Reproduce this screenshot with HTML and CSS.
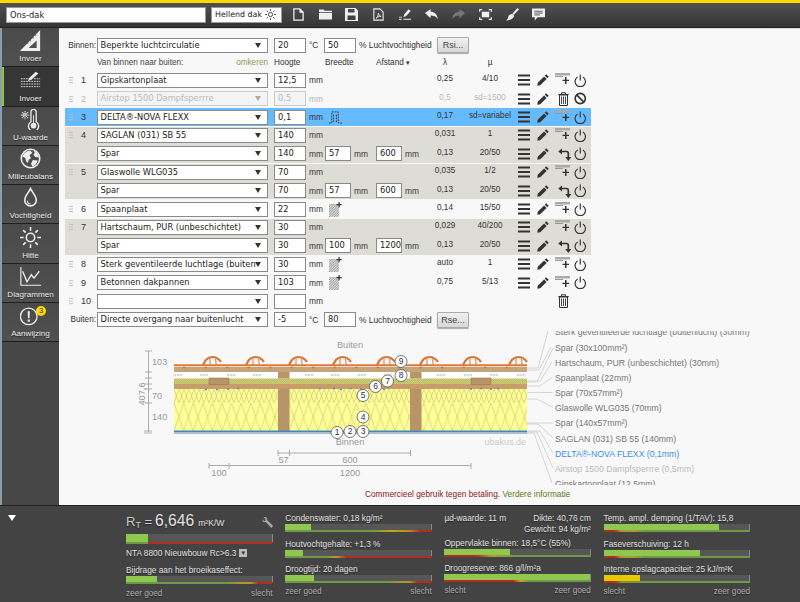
FILE: index.html
```html
<!DOCTYPE html>
<html lang="nl">
<head>
<meta charset="utf-8">
<title>Ons-dak</title>
<link rel="stylesheet" href="styles.css">
</head>
<body>
<svg class="defs" width="0" height="0">
  <symbol id="i-ham" viewBox="0 0 12 11"><path d="M0 0h12v2H0zM0 4.500h12v2H0zM0 9h12v2H0z"/></symbol>
  <symbol id="i-pen" viewBox="0 0 12 12"><path d="M9.200.3 11.700 2.800 10.300 4.200 7.800 1.700zM7.100 2.400 9.600 4.900 3.200 11.300.3 11.700.7 8.800z"/></symbol>
  <symbol id="i-add" viewBox="0 0 15 12"><path fill="#aaa" d="M0 0h15v2.500H0z"/><path fill="#999" d="M0 3h8v1H0z"/><path d="M10 4h1.500v2.700H14v1.400h-2.500V11H10V8.100H7.500V6.700H10z"/></symbol>
  <symbol id="i-pow" viewBox="0 0 13 13"><path fill="none" stroke="currentColor" stroke-width="1.200" d="M3.800 2.800a5.400 5.400 0 1 0 5.400 0M6.500.3v6.200"/></symbol>
  <symbol id="i-bin" viewBox="0 0 11 14"><path fill="none" stroke="currentColor" d="M1.500 3v10.500h8V3zM.3 2.500h10.400M3.500 2V.8h4V2"/><path stroke="currentColor" stroke-width=".9" d="M3.500 4.500v7.500M5.500 4.500v7.500M7.500 4.500v7.500"/></symbol>
  <symbol id="i-no" viewBox="0 0 11 11"><circle cx="5.500" cy="5.500" r="4.500" fill="none" stroke="currentColor" stroke-width="1.400"/><path stroke="currentColor" stroke-width="1.400" d="M2.300 2.300l6.400 6.400"/></symbol>
  <symbol id="i-turn" viewBox="0 0 13 13"><path fill="none" stroke="currentColor" stroke-width="1.700" d="M3 3.500h5.500q1.800 0 1.800 1.800V10"/><path d="M4 .5v6L.2 3.500zM7.300 9h6L10.300 13z"/></symbol>
  <symbol id="i-hatch" viewBox="0 0 13 15"><rect y="2" width="10" height="13" fill="url(#wood)"/><path d="M9.500 0h1.200v2h2v1.200h-2v2H9.500v-2h-2V2h2z"/></symbol>
  <pattern id="wood" width="2.500" height="2.500" patternUnits="userSpaceOnUse"><rect width="2.500" height="2.500" fill="#ddd"/><path d="M0 2.500 2.500 0" stroke="#777" stroke-width=".7"/></pattern>
</svg>

<div class="topline"></div>
<header class="toolbar">
  <div class="name">Ons-dak</div>
  <div class="kind">Hellend dak
    <svg class="sun" viewBox="0 0 12 12"><circle cx="6" cy="6" r="2.300" fill="none" stroke="#333"/><path stroke="#333" d="M6 0v2M6 10v2M0 6h2M10 6h2M1.800 1.800l1.400 1.400M8.800 8.800l1.400 1.400M1.800 10.200l1.400-1.400M8.800 3.200l1.400-1.400"/></svg>
  </div>
  <div class="tools">
    <svg viewBox="0 0 12 14"><path fill="none" stroke="#eee" stroke-width="1.400" d="M1 1h6.500L11 4.500V13H1z"/><path fill="#eee" d="M7 1h1l3 3v1H7z"/></svg>
    <svg viewBox="0 0 14 13"><path fill="#eee" d="M0 1h5l1 1.500h8V4H0zM0 5h14v7H0z"/></svg>
    <svg viewBox="0 0 13 13"><path fill="#eee" fill-rule="evenodd" d="M0 0h10.500L13 2.500V13H0zM3 1v3.500h6.500V1zM2.500 7.500V12h8V7.500z"/></svg>
    <svg viewBox="0 0 12 14"><path fill="none" stroke="#eee" stroke-width="1.200" d="M1 1h6.500L11 4.500V13H1z"/><path fill="none" stroke="#eee" d="M3.500 11c1.500-1 2.500-3.500 2.300-5.500.5 2 1.500 3 3 3.500-2 0-3.500.5-5.300 2z"/></svg>
    <svg viewBox="0 0 15 13"><path fill="#eee" d="M11 .5l2.500 2L8 8.500 5 9.500l1-3zM0 11.500h3v1H0zM5 11.500h9v1H5zM0 9h3.500v1H0z"/></svg>
    <svg viewBox="0 0 14 12"><path fill="#eee" d="M6 0v3c4 0 7 2.500 8 8-2-3-4.500-4-8-4v3L0 4.500z"/></svg>
    <svg viewBox="0 0 14 12"><path fill="#777" d="M8 0v3C4 3 1 5.500 0 11c2-3 4.500-4 8-4v3l6-5.500z"/></svg>
    <svg viewBox="0 0 14 12"><path fill="none" stroke="#eee" stroke-width="1.300" d="M0.700 3V.7H3.500M10.500.7h2.800V3M13.300 9v2.300h-2.800M3.500 11.300H.7V9"/><rect x="3" y="3" width="8" height="6" fill="#eee"/></svg>
    <svg viewBox="0 0 13 13"><path fill="#eee" d="M11.500 0 13 1.200 8 6.800 6.500 5.500zM6 6c1.500 0 2.500 1.200 1.800 2.800C7 11 3.500 12.500 0 12.500c1.500-1 2-2 2.200-3.500C2.500 7 4.500 6 6 6z"/></svg>
    <svg viewBox="0 0 14 13"><path fill="#eee" d="M0 0h14v9.500H6L3 13V9.500H0z"/><path stroke="#555" d="M2.500 3h9M2.500 5h9M2.500 7h6"/></svg>
  </div>
</header>

<div class="middle">
  <nav class="side">
    <a class="item">
      <svg viewBox="0 0 24 24"><path fill="#eee" fill-rule="evenodd" d="M23 0v24H0zM19 12 10 20.500h9z"/><path stroke="#4a4a4a" stroke-width=".8" d="M18 5v2M15 8v2M12 11v2M9 14v2"/></svg>
      <span>Invoer</span>
    </a>
    <a class="item active">
      <svg viewBox="0 0 24 20"><path stroke="#eee" stroke-dasharray="2 1" d="M1 8h11M1 11h22M1 14h22M1 17h22M16 8h7"/><path fill="#eee" d="M18 0l3 2-8 7-4 1.500L10.500 7z"/></svg>
      <span>Invoer</span>
    </a>
    <a class="item">
      <svg viewBox="0 0 24 24"><path fill="none" stroke="#eee" stroke-width="1.500" d="M12.500 14.500V3.500a3 3 0 0 1 6 0v11a5.800 5.800 0 1 1-6 0z"/><circle cx="15.500" cy="19" r="3.200" fill="#eee"/><path fill="#eee" d="M15 7h1v10h-1z"/><path stroke="#eee" stroke-width="1.200" stroke-dasharray="1.500 .6" d="M1 7h9.500M5.700 2.300v9.500M2.300 3.600l6.800 6.800M9.100 3.600l-6.800 6.800"/></svg>
      <span>U-waarde</span>
    </a>
    <a class="item">
      <svg viewBox="0 0 22 22"><circle cx="11" cy="11" r="9.700" fill="none" stroke="#eee" stroke-width="1.700"/><path fill="#eee" d="M4 6c2-2 5-3.500 7-3l2 2-3 2.500 1.500 3-2.500 2-.5 3-2-1-1-4-3-1.500zM14 2.500c3 1 5.500 4 5.500 7.500l-3.500-.5L14 7l1.500-2zM13.500 12.500l5 .5c-.5 3-3 5.500-5.500 6.500l-1.500-3z"/></svg>
      <span>Milieubalans</span>
    </a>
    <a class="item">
      <svg viewBox="0 0 14 20"><path fill="none" stroke="#eee" stroke-width="1.500" d="M7 1.500C5.500 5 1.500 8.500 1.500 12.500a5.500 5.500 0 0 0 11 0C12.500 8.500 8.500 5 7 1.500z"/><path fill="none" stroke="#eee" d="M4 13a3 3 0 0 0 3 3"/></svg>
      <span>Vochtigheid</span>
    </a>
    <a class="item">
      <svg viewBox="0 0 20 20"><circle cx="10" cy="10" r="4" fill="none" stroke="#eee" stroke-width="1.500"/><path stroke="#eee" stroke-width="1.500" d="M10 0v3.500M10 16.500V20M0 10h3.500M16.500 10H20M3 3l2.400 2.400M14.600 14.600 17 17M3 17l2.400-2.400M14.600 5.400 17 3"/></svg>
      <span>Hitte</span>
    </a>
    <a class="item">
      <svg viewBox="0 0 24 22"><path fill="none" stroke="#eee" stroke-width="1.300" d="M1 0v21h23"/><path fill="none" stroke="#eee" stroke-width="1.500" d="M3 5l5 12 5-8 3 4 6-8"/></svg>
      <span>Diagrammen</span>
    </a>
    <a class="item">
      <svg viewBox="0 0 24 24"><circle cx="10" cy="13" r="9.500" fill="none" stroke="#eee" stroke-width="1.500"/><path fill="#eee" d="M8.700 7h2.600l-.5 8H9.200zM8.800 16.500h2.400V19H8.800z"/></svg>
      <b class="badge">3</b>
      <span>Aanwijzing</span>
    </a>
  </nav>

  <main class="content">
    <form class="layers">
      <div class="air">
        <label class="lead lead-text">Binnen:</label>
        <div class="sel">Beperkte luchtcirculatie</div>
        <div class="inp first">20</div><span class="unit u-c">°C</span>
        <div class="inp">50</div><span class="unit u-pct">% Luchtvochtigheid</span>
        <button type="button" class="btn">Rsi...</button>
      </div>
      <div class="grid head">
        <span class="c-sel">Van binnen naar buiten:<em>omkeren</em></span>
        <span class="c-h">Hoogte</span><span class="c-w">Breedte</span><span class="c-d">Afstand <small>▾</small></span>
        <span class="c-l">λ</span><span class="c-m">µ</span>
      </div>

      <div class="grid row">
        <span class="lead"><i class="grip"></i><b>1</b></span><div class="sel">Gipskartonplaat</div>
        <div class="inp c-h">12,5</div><span class="unit">mm</span><span class="c-l">0,25</span><span class="c-m">4/10</span>
        <span class="acts"><svg><use href="#i-ham"/></svg><svg><use href="#i-pen"/></svg><svg class="wide"><use href="#i-add"/></svg><svg><use href="#i-pow"/></svg></span>
      </div>
      <div class="grid row off">
        <span class="lead"><i class="grip"></i><b>2</b></span><div class="sel">Airstop 1500 Dampfsperrre</div>
        <div class="inp c-h">0,5</div><span class="unit">mm</span><span class="c-l">0,5</span><span class="c-m">sd=1500</span>
        <span class="acts"><svg><use href="#i-ham"/></svg><svg><use href="#i-pen"/></svg><svg class="bin"><use href="#i-bin"/></svg><svg><use href="#i-no"/></svg></span>
      </div>
      <div class="grid row sel-row">
        <span class="lead"><i class="grip"></i><b>3</b></span><div class="sel">DELTA®-NOVA FLEXX</div>
        <div class="inp c-h">0,1</div><span class="unit">mm</span>
        <svg class="c-w mini" viewBox="0 0 14 14"><path fill="none" stroke="#333" stroke-dasharray="2 1" d="M0 13h3V1h7v12h4M5 4v8M8 4v8"/></svg>
        <span class="c-l">0,17</span><span class="c-m">sd=variabel</span>
        <span class="acts"><svg><use href="#i-ham"/></svg><svg><use href="#i-pen"/></svg><svg class="wide"><use href="#i-add"/></svg><svg><use href="#i-pow"/></svg></span>
      </div>

      <div class="group">
        <div class="grid row">
          <span class="lead"><i class="grip"></i><b>4</b></span><div class="sel">SAGLAN (031) SB 55</div>
          <div class="inp c-h">140</div><span class="unit">mm</span><span class="c-l">0,031</span><span class="c-m">1</span>
          <span class="acts"><svg><use href="#i-ham"/></svg><svg><use href="#i-pen"/></svg><svg class="wide"><use href="#i-add"/></svg><svg><use href="#i-pow"/></svg></span>
        </div>
        <div class="grid row">
          <span class="lead"></span><div class="sel">Spar</div>
          <div class="inp c-h">140</div><span class="unit">mm</span><div class="inp c-w">57</div><span class="unit">mm</span><div class="inp c-d">600</div><span class="unit">mm</span><span class="c-l">0,13</span><span class="c-m">20/50</span>
          <span class="acts"><svg><use href="#i-ham"/></svg><svg><use href="#i-pen"/></svg><svg class="turn"><use href="#i-turn"/></svg><svg><use href="#i-pow"/></svg></span>
        </div>
      </div>
      <div class="group">
        <div class="grid row">
          <span class="lead"><i class="grip"></i><b>5</b></span><div class="sel">Glaswolle WLG035</div>
          <div class="inp c-h">70</div><span class="unit">mm</span><span class="c-l">0,035</span><span class="c-m">1/2</span>
          <span class="acts"><svg><use href="#i-ham"/></svg><svg><use href="#i-pen"/></svg><svg class="wide"><use href="#i-add"/></svg><svg><use href="#i-pow"/></svg></span>
        </div>
        <div class="grid row">
          <span class="lead"></span><div class="sel">Spar</div>
          <div class="inp c-h">70</div><span class="unit">mm</span><div class="inp c-w">57</div><span class="unit">mm</span><div class="inp c-d">600</div><span class="unit">mm</span><span class="c-l">0,13</span><span class="c-m">20/50</span>
          <span class="acts"><svg><use href="#i-ham"/></svg><svg><use href="#i-pen"/></svg><svg class="turn"><use href="#i-turn"/></svg><svg><use href="#i-pow"/></svg></span>
        </div>
      </div>

      <div class="grid row">
        <span class="lead"><i class="grip"></i><b>6</b></span><div class="sel">Spaanplaat</div>
        <div class="inp c-h">22</div><span class="unit">mm</span><svg class="c-w mini"><use href="#i-hatch"/></svg><span class="c-l">0,14</span><span class="c-m">15/50</span>
        <span class="acts"><svg><use href="#i-ham"/></svg><svg><use href="#i-pen"/></svg><svg class="wide"><use href="#i-add"/></svg><svg><use href="#i-pow"/></svg></span>
      </div>

      <div class="group">
        <div class="grid row">
          <span class="lead"><i class="grip"></i><b>7</b></span><div class="sel">Hartschaum, PUR (unbeschichtet)</div>
          <div class="inp c-h">30</div><span class="unit">mm</span><span class="c-l">0,029</span><span class="c-m">40/200</span>
          <span class="acts"><svg><use href="#i-ham"/></svg><svg><use href="#i-pen"/></svg><svg class="wide"><use href="#i-add"/></svg><svg><use href="#i-pow"/></svg></span>
        </div>
        <div class="grid row">
          <span class="lead"></span><div class="sel">Spar</div>
          <div class="inp c-h">30</div><span class="unit">mm</span><div class="inp c-w">100</div><span class="unit">mm</span><div class="inp c-d">1200</div><span class="unit">mm</span><span class="c-l">0,13</span><span class="c-m">20/50</span>
          <span class="acts"><svg><use href="#i-ham"/></svg><svg><use href="#i-pen"/></svg><svg class="turn"><use href="#i-turn"/></svg><svg><use href="#i-pow"/></svg></span>
        </div>
      </div>

      <div class="grid row">
        <span class="lead"><i class="grip"></i><b>8</b></span><div class="sel">Sterk geventileerde luchtlage (buiten</div>
        <div class="inp c-h">30</div><span class="unit">mm</span><svg class="c-w mini"><use href="#i-hatch"/></svg><span class="c-l">auto</span><span class="c-m">1</span>
        <span class="acts"><svg><use href="#i-ham"/></svg><svg><use href="#i-pen"/></svg><svg class="wide"><use href="#i-add"/></svg><svg><use href="#i-pow"/></svg></span>
      </div>
      <div class="grid row">
        <span class="lead"><i class="grip"></i><b>9</b></span><div class="sel">Betonnen dakpannen</div>
        <div class="inp c-h">103</div><span class="unit">mm</span><svg class="c-w mini"><use href="#i-hatch"/></svg><span class="c-l">0,75</span><span class="c-m">5/13</span>
        <span class="acts"><svg><use href="#i-ham"/></svg><svg><use href="#i-pen"/></svg><svg class="wide"><use href="#i-add"/></svg><svg><use href="#i-pow"/></svg></span>
      </div>
      <div class="grid row">
        <span class="lead"><i class="grip"></i><b>10</b></span><div class="sel"></div>
        <div class="inp c-h"></div><span class="unit">mm</span>
        <span class="acts only-bin"><svg class="bin"><use href="#i-bin"/></svg></span>
      </div>

      <div class="air outer">
        <label class="lead lead-text">Buiten:</label>
        <div class="sel">Directe overgang naar buitenlucht</div>
        <div class="inp first">-5</div><span class="unit u-c">°C</span>
        <div class="inp">80</div><span class="unit u-pct">% Luchtvochtigheid</span>
        <button type="button" class="btn">Rse...</button>
      </div>
    </form>

    <svg class="diagram" viewBox="59 333 741 154" width="741" height="154">
      <defs>
        <pattern id="zig-l" x="174" y="405" width="9.600" height="28" patternUnits="userSpaceOnUse"><path fill="none" stroke="#c9c168" stroke-width=".6" d="M0 0 9.600 28M9.600 0 0 28"/></pattern>
        <pattern id="zig-s" x="174" y="391" width="5" height="14" patternUnits="userSpaceOnUse"><path fill="none" stroke="#c9c168" stroke-width=".6" d="M0 0 5 14M5 0 0 14"/></pattern>
        <pattern id="foam" width="2" height="2" patternUnits="userSpaceOnUse"><rect width="2" height="2" fill="#cfcf78"/><path d="M0 2 2 0" stroke="#a8a850" stroke-width=".5"/></pattern>
        <g id="tile"><path fill="none" stroke="#d9763a" stroke-width="2.200" d="M-9 0C-7-4-5-8 0-8 4-8 7-6 9-3"/><path fill="none" stroke="#d9763a" d="M-2-7V0M3-6C4-5 4-3 4 0"/></g>
        <g id="vent"><g fill="none" stroke="#aaa" stroke-width=".5"><circle cx="0" cy="377" r="1"/><circle cx="3" cy="377" r="1"/><circle cx="6" cy="377" r="1"/></g></g>
      </defs>

      <!-- layers -->
      <rect x="174" y="374" width="353" height="6.500" fill="#fff"/>
      <rect x="174" y="380.500" width="353" height="5.500" fill="url(#foam)"/>
      <rect x="174" y="386" width="353" height="5" fill="#c99c6b"/>
      <rect x="174" y="391" width="353" height="14" fill="#ffff99"/>
      <rect x="174" y="391" width="353" height="14" fill="url(#zig-s)"/>
      <rect x="174" y="405" width="353" height="28" fill="#ffff99"/>
      <rect x="174" y="405" width="353" height="28" fill="url(#zig-l)"/>
      <rect x="278" y="374" width="11.500" height="6.500" fill="#b99468"/>
      <rect x="410" y="374" width="11.500" height="6.500" fill="#b99468"/>
      <rect x="278" y="391" width="11.500" height="42" fill="#b99468"/>
      <rect x="410" y="391" width="11.500" height="42" fill="#b99468"/>
      <rect x="209" y="380" width="20" height="6.500" fill="#b99468" stroke="#8d7048" stroke-width=".5"/>
      <rect x="471" y="380" width="20" height="6.500" fill="#b99468" stroke="#8d7048" stroke-width=".5"/>
      <rect x="174" y="369" width="353" height="5" fill="#c4a479"/>
      <path stroke="#e07838" stroke-width="2" d="M174 367.300H527"/>
      <path stroke="#d9763a" stroke-width="1.500" stroke-dasharray="2.500 19" d="M183 369.500H527"/>
      <path stroke="#3a8abf" stroke-width="1.800" d="M174 433.500H527"/>
      <path stroke="#bbb" d="M174 435.500H527"/>
      <g>
        <use href="#tile" x="212" y="367"/><use href="#tile" x="255" y="367"/><use href="#tile" x="298" y="367"/><use href="#tile" x="342" y="367"/><use href="#tile" x="386" y="367"/><use href="#tile" x="429" y="367"/><use href="#tile" x="472" y="367"/><use href="#tile" x="518" y="367"/>
      </g>
      <g>
        <use href="#vent" x="175"/><use href="#vent" x="201"/><use href="#vent" x="228"/><use href="#vent" x="254"/><use href="#vent" x="306"/><use href="#vent" x="332"/><use href="#vent" x="359"/><use href="#vent" x="385"/><use href="#vent" x="438"/><use href="#vent" x="465"/><use href="#vent" x="491"/><use href="#vent" x="518"/>
      </g>
      <g fill="#3b8fe8">
        <circle cx="206" cy="391.500" r="1"/><circle cx="217" cy="391.500" r="1"/><circle cx="228" cy="391" r="1"/><circle cx="238" cy="390.500" r="1"/><circle cx="320" cy="390.500" r="1"/><circle cx="334" cy="390.500" r="1"/><circle cx="341" cy="391.500" r="1"/><circle cx="351" cy="390.500" r="1"/><circle cx="361" cy="391" r="1"/><circle cx="384" cy="391" r="1"/><circle cx="471" cy="391" r="1"/><circle cx="481" cy="390.500" r="1"/><circle cx="491" cy="391" r="1"/><circle cx="498" cy="390.500" r="1"/>
      </g>

      <!-- leader lines -->
      <g fill="none" stroke="#ccc" stroke-width=".8">
        <path d="M527 370h11l10-37"/><path d="M527 372h12l12-23"/><path d="M527 383h13l12-19"/><path d="M527 384h10l16-34"/><path d="M527 388h13l12-8.500"/><path d="M527 394.500h26"/><path d="M527 401h10l16 8.500"/><path d="M527 425h26"/><path d="M527 426h11l15 14"/><path d="M527 433h13l13 22"/><path d="M527 434h10l16 36"/><path d="M527 435h7l18 50"/>
      </g>

      <!-- dimensions -->
      <g fill="none" stroke="#999" stroke-width=".8">
        <path d="M148.500 353V434M145 353h7M145 374h7M145 380h7M145 386h7M145 391h7M145 405h7M144 433h8M144 435h8"/>
        <path d="M278 455h133M278 452v6M289.500 452v6M410.500 452v6"/>
        <path d="M209 467.500h262M209 465v6M229 465v6M471 465v6"/>
      </g>
      <g class="dim">
        <text x="152" y="367">103</text><text x="152" y="401">70</text><text x="152" y="422">140</text>
        <text transform="rotate(-90 145 396)" x="145" y="396" text-anchor="middle">407,6</text>
        <text x="283.500" y="465" text-anchor="middle">57</text><text x="350" y="465" text-anchor="middle">600</text>
        <text x="219" y="477.500" text-anchor="middle">100</text><text x="350" y="477.500" text-anchor="middle">1200</text>
        <text x="350" y="349.500" text-anchor="middle">Buiten</text><text x="350" y="446.500" text-anchor="middle">Binnen</text>
      </g>
      <text class="brand" x="526" y="446.500" text-anchor="end">ubakus.de</text>

      <!-- number markers -->
      <g class="marks">
        <g><circle cx="363" cy="397.500" r="6"/><text x="363" y="400.300">5</text></g>
        <g><circle cx="363" cy="419" r="6"/><text x="363" y="421.800">4</text></g>
        <g><circle cx="337" cy="434.500" r="6"/><text x="337" y="437.300">1</text></g>
        <g><circle cx="350" cy="433.500" r="6"/><text x="350" y="436.300">2</text></g>
        <g><circle cx="363" cy="433.500" r="6"/><text x="363" y="436.300">3</text></g>
        <g><circle cx="375.500" cy="388.500" r="6"/><text x="375.500" y="391.300">6</text></g>
        <g><circle cx="387.500" cy="383" r="6"/><text x="387.500" y="385.800">7</text></g>
        <g><circle cx="401" cy="377.500" r="6"/><text x="401" y="380.300">8</text></g>
        <g><circle cx="401" cy="363.500" r="6"/><text x="401" y="366.300">9</text></g>
      </g>

      <!-- legend -->
      <g class="legend">
        <text x="555" y="337">Sterk geventileerde luchtlage (buitenlucht) (30mm)</text>
        <text x="555" y="352.500">Spar (30x100mm²)</text>
        <text x="555" y="367.500">Hartschaum, PUR (unbeschichtet) (30mm)</text>
        <text x="555" y="382.800">Spaanplaat (22mm)</text>
        <text x="555" y="398">Spar (70x57mm²)</text>
        <text x="555" y="413">Glaswolle WLG035 (70mm)</text>
        <text x="555" y="428.300">Spar (140x57mm²)</text>
        <text x="555" y="443.500">SAGLAN (031) SB 55 (140mm)</text>
        <text class="cur" x="555" y="459">DELTA®-NOVA FLEXX (0,1mm)</text>
        <text class="dis" x="555" y="474">Airstop 1500 Dampfsperrre (0,5mm)</text>
        <text x="555" y="489">Gipskartonplaat (12,5mm)</text>
      </g>
    </svg>

    <p class="notice">Commercieel gebruik tegen betaling. <a>Verdere informatie</a></p>
  </main>
</div>

<footer class="results">
  <span class="toggle"></span>
  <section class="col">
    <div class="rt"><span class="r">R<sub>T</sub> =</span> <span class="big">6,646</span> <span class="rt-u">m²K/W</span>
      <svg class="wrench" viewBox="0 0 12 12"><path fill="#aaa" d="M0 2.500 2.500 4.500 4 3.500 3.500 1.500 1.500 0C4 -.5 6 1 5.800 3.500L12 9.500 10.500 12 4 5.500C2 6 0 5 0 2.500z"/></svg>
    </div>
    <div class="bar tall"><i class="val" style="width:15%"></i><i class="scale s-rt"></i></div>
    <div class="nta">NTA 8800 Nieuwbouw Rc&gt;6.3 <span class="drop">▼</span></div>
    <div class="lbl">Bijdrage aan het broeikaseffect:</div>
    <div class="bar"><i class="val" style="width:21%"></i><i class="scale s-a"></i></div>
    <div class="ends first-ends"><span>zeer goed</span><span>slecht</span></div>
  </section>
  <section class="col">
    <div class="m"><div class="lbl">Condenswater: 0,18 kg/m²</div><div class="bar"><i class="val" style="width:18%"></i><i class="scale s-b"></i></div></div>
    <div class="m"><div class="lbl">Houtvochtgehalte: +1,3 %</div><div class="bar"><i class="val" style="width:12%"></i><i class="scale s-c"></i></div></div>
    <div class="m"><div class="lbl">Droogtijd: 20 dagen</div><div class="bar"><i class="val" style="width:20%"></i><i class="scale s-a"></i></div></div>
    <div class="ends"><span>zeer goed</span><span>slecht</span></div>
  </section>
  <section class="col">
    <div class="info">
      <div class="info-l"><span>µd-waarde: 11 m</span><span>Dikte: 40,76 cm</span></div>
      <div class="info-r">Gewicht: 94 kg/m²</div>
    </div>
    <div class="m"><div class="lbl">Oppervlakte binnen: 18,5°C (55%)</div><div class="bar"><i class="val" style="width:45%"></i><i class="scale s-d"></i></div></div>
    <div class="m"><div class="lbl">Droogreserve: 866 g/l/m²a</div><div class="bar"><i class="val" style="width:100%"></i><i class="scale s-e"></i></div></div>
    <div class="ends"><span>slecht</span><span>zeer goed</span></div>
  </section>
  <section class="col">
    <div class="m"><div class="lbl">Temp. ampl. demping (1/TAV): 15,8</div><div class="bar"><i class="val" style="width:79%"></i><i class="scale s-f"></i></div></div>
    <div class="m"><div class="lbl">Faseverschuiving: 12 h</div><div class="bar"><i class="val" style="width:66%"></i><i class="scale s-f"></i></div></div>
    <div class="m"><div class="lbl">Interne opslagcapaciteit: 25 kJ/m²K</div><div class="bar"><i class="val warn" style="width:25%"></i><i class="scale s-g"></i></div></div>
    <div class="ends"><span>slecht</span><span>zeer goed</span></div>
  </section>
</footer>
</body>
</html>
```
FILE: styles.css
```css
* { box-sizing: border-box; }
html, body { margin: 0; height: 602px; overflow: hidden; }
body { display: flex; flex-direction: column; font: 8.200px "Liberation Sans", Arial, sans-serif; color: #333; background: #f8f8f8; }
.defs { position: absolute; }

.topline { height: 2.500px; flex: none; background: #ffd800; }
.toolbar { flex: none; height: 25.500px; display: flex; align-items: center; padding-left: 6px; background: linear-gradient(#505050, #353535); border-bottom: 1px solid #222; }
.name, .kind { height: 16.500px; background: #fff; border: 1px solid #999; font: 8.300px "DejaVu Sans", Verdana, sans-serif; display: flex; align-items: center; color: #222; }
.name { width: 200px; padding-left: 3px; }
.kind { width: 71px; margin-left: 5px; padding-left: 3px; white-space: nowrap; font-size: 7.900px; }
.sun { width: 11px; height: 11px; margin-left: 3px; }
.tools { display: flex; align-items: center; margin-left: 10px; }
.tools svg { width: 13px; height: 13px; margin-right: 13.700px; }

.middle { flex: 1; min-height: 0; display: flex; }
.side { width: 59px; flex: none; background: #474747; border-left: 2px solid #8b9cab; }
.item { position: relative; display: flex; flex-direction: column; align-items: center; justify-content: flex-end; height: 39.300px; padding-bottom: 3px; background: linear-gradient(#4a4a4a, #505050); border-bottom: 1px solid #1e1e1e; color: #eee; font-size: 8.100px; text-shadow: 0 1px 1px #222; }
.item svg { width: 21px; height: 21px; margin-bottom: 3px; }
.item.active { background: #363636; box-shadow: inset 2px 0 #8cc63f; }
.badge { position: absolute; top: 3px; left: 34px; width: 10px; height: 10px; border-radius: 50%; background: #ffd800; color: #333; font: 400 7.500px/10px "Liberation Sans", sans-serif; text-align: center; text-shadow: none; }

.content { flex: 1; min-width: 0; display: flex; flex-direction: column; overflow: hidden; border-top: 1px solid #ddd; }
.layers { margin: 7.500px 0 0 6px; width: 526px; }
.air, .grid { height: 17.400px; }
.air { display: flex; align-items: center; }
.outer { margin-top: 1.500px; }
.lead { width: 32px; display: flex; align-items: center; }
.lead b { font-weight: 400; font-size: 9px; margin-left: 8px; }
.lead-text { justify-content: flex-end; padding-right: 1px; white-space: nowrap; }
.grip { width: 4px; height: 8px; margin-left: 4px; background: radial-gradient(circle, #bbb 0.8px, transparent 1px) 0 0 / 2px 2.700px; }

.sel { width: 171px; height: 15px; padding: 0 15px 0 2.500px; background: #fff; border: 1px solid #8a8a8a; font: 8.300px/13px "DejaVu Sans", Verdana, sans-serif; white-space: nowrap; overflow: hidden; position: relative; color: #222; }
.sel::after { content: ""; position: absolute; right: 6px; top: 4px; border: 3.500px solid transparent; border-top: 5px solid #333; border-bottom: 0; }
.inp { height: 15px; background: #fff; border: 1px solid #8a8a8a; padding-left: 3px; font: 8.300px/13px "DejaVu Sans", Verdana, sans-serif; white-space: nowrap; overflow: hidden; color: #222; }
.air .inp { width: 32px; }
.air .first { margin-left: 6px; }
.unit { padding-left: 3px; white-space: nowrap; font-size: 8.400px; }
.u-c { width: 18px; }
.u-pct { width: 81px; }
.btn { width: 32px; height: 15.500px; padding: 0; margin: 0; background: linear-gradient(#f0f0f0, #d8d8d8); border: 1px solid #aaa; border-radius: 1px; box-shadow: 0 1px 1px #aaa; font: 9px "Liberation Sans", sans-serif; color: #444; }

.grid { display: grid; grid-template-columns: 32px 171px 38px 19px 26px 25px 26px 23px 40px 50px 76px; align-items: center; }
.grid > .lead { grid-column: 1; }
.grid > .sel { grid-column: 2; }
.grid .c-h { grid-column: 3; justify-self: end; }
.grid .inp.c-h { width: 32px; }
.grid .inp.c-w, .grid .inp.c-d { width: 26px; }
.grid .c-w { grid-column: 5; }
.grid .c-d { grid-column: 7; }
.grid .c-l { grid-column: 9; text-align: center; margin-bottom: 3px; }
.grid .c-m { grid-column: 10; text-align: center; margin-bottom: 3px; white-space: nowrap; }
.grid .inp.c-h + .unit { grid-column: 4; }
.grid .inp.c-w + .unit { grid-column: 6; }
.grid .inp.c-d + .unit { grid-column: 8; }
.acts { grid-column: 11; display: flex; align-items: center; padding-left: 3px; color: #333; }
.acts svg { width: 12px; height: 12px; margin-right: 6.500px; fill: #333; flex: none; }
.acts .wide { width: 15px; height: 12px; margin-right: 4px; margin-top: -2px; }
.acts .bin { width: 11px; height: 14px; margin: 0 5px 0 3px; }
.acts .turn { width: 13px; height: 13px; margin: 1px 3px 0 3px; }
.acts svg:last-child { width: 12.500px; height: 13px; margin-right: 0; }
.acts.only-bin { padding-left: 40px; }
.acts.only-bin svg:last-child { width: 11px; height: 14px; }
.mini { width: 13px; height: 15px; margin-left: 4px; fill: #333; }

.head { margin-bottom: .300px; }
.head .c-sel { grid-column: 2; display: flex; justify-content: space-between; color: #444; }
.head em { font-style: normal; color: #8e9c52; }
.head .c-h { justify-self: start; margin-left: 6px; }
.head .c-w, .head .c-d { justify-self: start; white-space: nowrap; }
.head .c-d { grid-column: 7 / 9; }
.head small { font-size: 7px; }
.grid.head .c-l, .grid.head .c-m { margin-bottom: 0; }

.row { margin-bottom: 1px; }
.group { height: 35.800px; background: #deddd5; margin-bottom: 1px; }
.group .row:last-child { margin-bottom: 0; }
.sel-row { background: #66bbff; }
.off { color: #b8b8b8; }
.off .sel, .off .inp { border-color: #ccc; background: #f4f4f4; color: #bbb; }
.off .sel::after { border-top-color: #aaa; }

.diagram { display: block; margin-top: 2.200px; flex: none; }
.dim text { font-size: 9.200px; fill: #999; }
.brand { font-size: 9px; fill: #ccc; }
.marks circle { fill: #fff; stroke: #555; stroke-width: .8; }
.marks text { font-size: 8.500px; fill: #333; text-anchor: middle; }
.legend text { font-size: 8.700px; fill: #777; }
.legend .cur { fill: #3b8fe8; }
.legend .dis { fill: #bbb; }
.notice { margin: 4px 0 0 306px; font-size: 8.300px; color: #8b2020; white-space: nowrap; }
.notice a { color: #5a7a20; }

.results { flex: none; height: 97px; position: relative; display: grid; grid-template-columns: repeat(4, 146.500px); column-gap: 12.700px; padding: 6px 0 0 126px; background: #434343; border-top: 1px solid #222; color: #e4e4e4; text-shadow: 0 1px 1px #222; font-size: 8.300px; }
.toggle { position: absolute; left: 8px; top: 9px; border: 4px solid transparent; border-top: 6.500px solid #fff; border-bottom: 0; }
.col { display: flex; flex-direction: column; min-width: 0; position: relative; }
.lbl { height: 12px; line-height: 12px; white-space: nowrap; }
.m { height: 25.500px; }
.bar { position: relative; height: 8px; background: #565656; border-right: 1px solid #888; display: flex; flex-direction: column; }
.val { display: block; height: 6px; background: #8fc750; flex: none; }
.warn { background: #e5c800; }
.scale { display: block; height: 2px; flex: none; margin-right: -1px; }
.tall { height: 10px; }
.tall .val { height: 8px; }
.s-rt { background: linear-gradient(90deg, #6f9a45 15%, #b52a1e 15%); }
.s-a { background: linear-gradient(90deg, #6f9a45 70%, #a9982f 78%, #a9982f 85%, #b52a1e 90%); }
.s-b { background: linear-gradient(90deg, #6f9a45 60%, #c4a020 72%, #b88a20 85%, #b52a1e 92%); }
.s-c { background: linear-gradient(90deg, #6f9a45 28%, #b09a30 35%, #b52a1e 42%); }
.s-d { background: linear-gradient(90deg, #b52a1e 22%, #b09a30 32%, #8ca035 42%, #6f9a45 48%); }
.s-e { background: linear-gradient(90deg, #b52a1e 47%, #c4a020 52%, #6f9a45 58%); }
.s-f { background: linear-gradient(90deg, #b52a1e 7%, #a9982f 12%, #a9982f 22%, #6f9a45 27%); }
.s-g { background: linear-gradient(90deg, #b52a1e 7%, #8f8a30 12%, #6f9a45 25%); }
.ends { display: flex; justify-content: space-between; height: 12px; line-height: 12px; margin-top: -2.500px; color: #b0b0b0; font-size: 8.200px; }
.first-ends { margin-top: 4px; }
.rt { height: 22px; display: flex; align-items: baseline; white-space: nowrap; position: relative; }
.r { font-size: 13px; color: #ccc; margin-right: 3px; }
.r sub { font-size: 9px; vertical-align: -2px; line-height: 0; }
.big { font-size: 15.600px; margin-right: 4px; }
.rt-u { font-size: 8.600px; }
.wrench { position: absolute; right: 0; top: 5px; width: 11px; height: 11px; }
.nta { height: 14px; margin: 2px 0 4px; line-height: 14px; white-space: nowrap; display: flex; align-items: center; gap: 3px; }
.drop { width: 8px; height: 8px; background: #bbb; color: #333; font-size: 6px; line-height: 8px; text-align: center; text-shadow: none; }
.info { height: 24.500px; }
.info-l { height: 12px; line-height: 12px; display: flex; justify-content: space-between; }
.info-r { line-height: 10px; text-align: right; }
```
